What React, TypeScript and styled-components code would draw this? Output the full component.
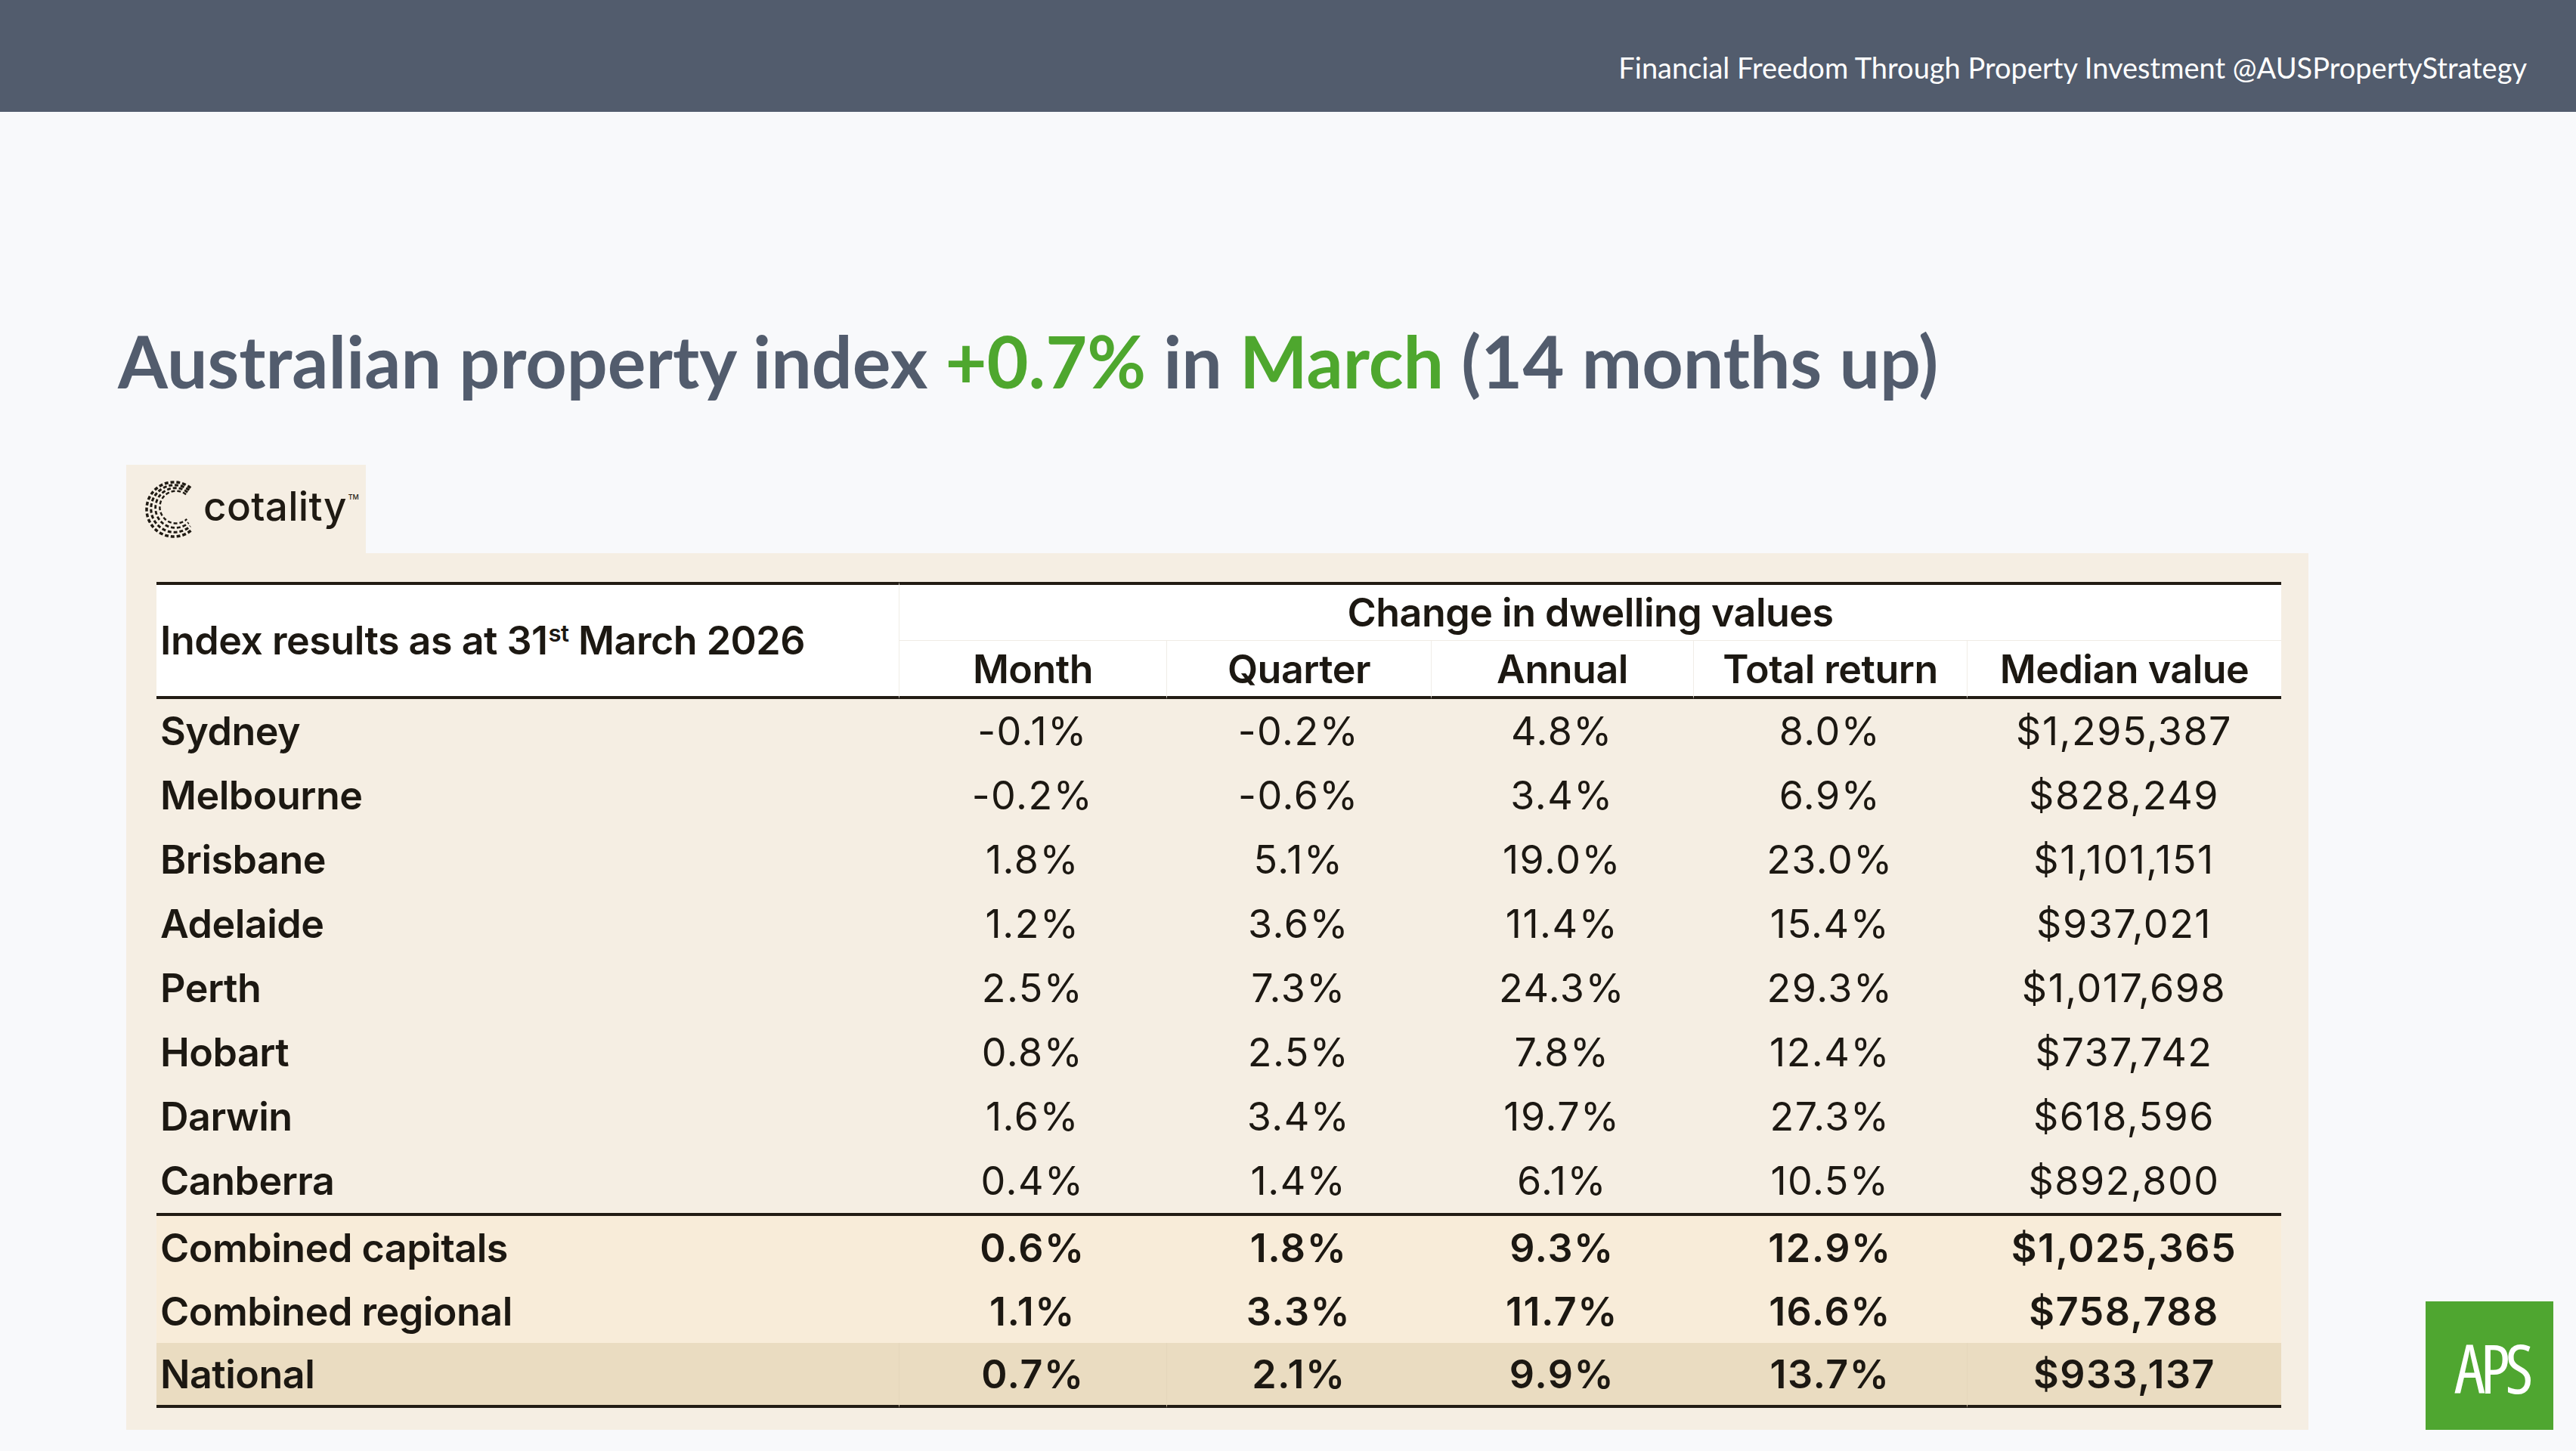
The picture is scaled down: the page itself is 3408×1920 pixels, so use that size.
import styled, { createGlobalStyle } from "styled-components";

const GlobalStyle = createGlobalStyle`
  html, body {
    margin: 0;
    padding: 0;
    background: #f8f9fb;
  }
  * { box-sizing: border-box; }
`;

type Tone = "city" | "combined" | "national";

const cities: string[][] = [
  ["Sydney", "-0.1%", "-0.2%", "4.8%", "8.0%", "$1,295,387"],
  ["Melbourne", "-0.2%", "-0.6%", "3.4%", "6.9%", "$828,249"],
  ["Brisbane", "1.8%", "5.1%", "19.0%", "23.0%", "$1,101,151"],
  ["Adelaide", "1.2%", "3.6%", "11.4%", "15.4%", "$937,021"],
  ["Perth", "2.5%", "7.3%", "24.3%", "29.3%", "$1,017,698"],
  ["Hobart", "0.8%", "2.5%", "7.8%", "12.4%", "$737,742"],
  ["Darwin", "1.6%", "3.4%", "19.7%", "27.3%", "$618,596"],
  ["Canberra", "0.4%", "1.4%", "6.1%", "10.5%", "$892,800"],
];

const summary: { tone: Tone; cells: string[] }[] = [
  { tone: "combined", cells: ["Combined capitals", "0.6%", "1.8%", "9.3%", "12.9%", "$1,025,365"] },
  { tone: "combined", cells: ["Combined regional", "1.1%", "3.3%", "11.7%", "16.6%", "$758,788"] },
  { tone: "national", cells: ["National", "0.7%", "2.1%", "9.9%", "13.7%", "$933,137"] },
];

const columns = ["Month", "Quarter", "Annual", "Total return", "Median value"];
const colWidths = [982, 354, 350, 347, 362, 416];

const Page = styled.div`
  width: 3408px;
  height: 1920px;
  background: #f8f9fb;
  overflow: hidden;
`;

const TopBar = styled.header`
  height: 148px;
  background: #525c6d;
  display: flex;
  justify-content: flex-end;
  align-items: flex-start;
  padding: 67px 65px 0 0;
`;

const Tagline = styled.div`
  font-family: Lato, "Open Sans", sans-serif;
  font-size: 38px;
  line-height: 45px;
  color: #ffffff;
`;

const Main = styled.main`
  padding: 0 30px 0 156px;
`;

const Title = styled.h1`
  margin: 272px 0 0;
  font-family: Lato, "Open Sans", sans-serif;
  font-weight: 700;
  font-size: 95px;
  line-height: 115px;
  color: #525c6d;
`;

const Accent = styled.span`
  color: #4ea72e;
`;

const Lower = styled.div`
  display: flex;
  align-items: flex-end;
  gap: 155px;
  margin-top: 80px;
  padding-left: 11px;
`;

const Report = styled.section`
  width: 2887px;
  display: flex;
  flex-direction: column;
`;

const LogoTab = styled.div`
  width: 317px;
  height: 117px;
  background: #f5eee3;
  display: flex;
  align-items: center;
  gap: 2px;
  padding-left: 24px;
`;

const Wordmark = styled.span`
  font-family: Inter, "Liberation Sans", sans-serif;
  font-weight: 500;
  font-size: 53px;
  letter-spacing: 0.3px;
  color: #1f1a13;
  position: relative;
  top: -4px;
`;

const Tm = styled.sup`
  font-size: 9px;
  vertical-align: 28px;
  margin-left: 2px;
  letter-spacing: 0;
`;

const Panel = styled.div`
  height: 1160px;
  background: #f5eee3;
  padding: 38px 36px 0 40px;
`;

const Table = styled.table`
  width: 2811px;
  table-layout: fixed;
  border-collapse: separate;
  border-spacing: 0;
  font-family: Inter, "Liberation Sans", sans-serif;
  color: #1c1812;
`;

const HeadCell = styled.th<{ $first?: boolean; $top?: boolean; $bottom?: boolean; $divider?: boolean; $low?: boolean }>`
  background: #ffffff;
  font-size: 52px;
  line-height: 62px;
  font-weight: 600;
  letter-spacing: -0.5px;
  padding: 0 0 ${(p) => (p.$low ? "4px" : "0")} ${(p) => (p.$first ? "5px" : "0")};
  text-align: ${(p) => (p.$first ? "left" : "center")};
  vertical-align: ${(p) => (p.$low ? "bottom" : "middle")};
  white-space: nowrap;
  border-top: ${(p) => (p.$top ? "4px solid #221c14" : "0")};
  border-bottom: ${(p) => (p.$bottom ? "4px solid #221c14" : "1px solid #efebe4")};
  border-left: ${(p) => (p.$divider ? "1px solid #f0ede7" : "0")};
`;

const Sup = styled.sup`
  font-size: 31px;
  vertical-align: 17px;
  line-height: 0;
  margin-left: 1px;
`;

const Row = styled.tr<{ $tone: Tone; $h: number }>`
  height: ${(p) => p.$h}px;
  background: ${(p) =>
    p.$tone === "national" ? "#eadcc1" : p.$tone === "combined" ? "#f8ecd9" : "transparent"};
`;

const Cell = styled.td<{ $first?: boolean; $strong?: boolean; $ruleBottom?: boolean; $soft?: boolean }>`
  font-size: 52px;
  font-weight: ${(p) => (p.$first || p.$strong ? 600 : 400)};
  letter-spacing: ${(p) => (p.$first ? "-0.5px" : "1.5px")};
  padding: 0 0 0 ${(p) => (p.$first ? "5px" : "0")};
  text-align: ${(p) => (p.$first ? "left" : "center")};
  vertical-align: middle;
  white-space: nowrap;
  border-bottom: ${(p) => (p.$ruleBottom ? "4px solid #221c14" : "0")};
  border-left: ${(p) => (p.$soft && !p.$first ? "1px solid #e5d7bb" : "0")};
`;

const ApsBadge = styled.div`
  width: 169px;
  height: 170px;
  flex: none;
  background: #4fa630;
  display: flex;
  align-items: center;
  justify-content: center;
  padding-top: 4px;
`;

const ApsText = styled.span`
  font-family: "Open Sans", "Noto Sans", sans-serif;
  font-stretch: 82%;
  font-weight: 500;
  font-size: 90px;
  line-height: 1;
  letter-spacing: -6px;
  color: #ffffff;
  margin-right: -6px;
`;

function CotalityMark() {
  const cx = 40;
  const cy = 40;
  const arc = (r: number, ox: number, oy: number) => {
    const a0 = (-52 * Math.PI) / 180;
    const a1 = (48 * Math.PI) / 180;
    const x0 = cx + ox + r * Math.cos(a0);
    const y0 = cy + oy + r * Math.sin(a0);
    const x1 = cx + ox + r * Math.cos(a1);
    const y1 = cy + oy + r * Math.sin(a1);
    return `M${x0.toFixed(1)} ${y0.toFixed(1)} A${r} ${r} 0 1 0 ${x1.toFixed(1)} ${y1.toFixed(1)}`;
  };
  const rings = [
    { r: 37, ox: 0, oy: 0, w: 3.6 },
    { r: 32, ox: 1, oy: -1, w: 3.2 },
    { r: 27, ox: 2, oy: -2, w: 2.9 },
    { r: 22, ox: 3, oy: -3, w: 2.5 },
  ];
  return (
    <svg width="76" height="82" viewBox="0 0 78 80">
      {rings.map((g, i) => (
        <path
          key={i}
          d={arc(g.r, g.ox, g.oy)}
          fill="none"
          stroke="#1f1a13"
          strokeWidth={g.w}
          strokeDasharray="5 3"
          strokeLinecap="butt"
        />
      ))}
    </svg>
  );
}

export default function App() {
  return (
    <Page>
      <GlobalStyle />
      <TopBar>
        <Tagline>Financial Freedom Through Property Investment @AUSPropertyStrategy</Tagline>
      </TopBar>
      <Main>
        <Title>
          Australian property index <Accent>+0.7%</Accent> in <Accent>March</Accent> (14 months up)
        </Title>
        <Lower>
          <Report>
            <LogoTab>
              <CotalityMark />
              <Wordmark>
                cotality<Tm>TM</Tm>
              </Wordmark>
            </LogoTab>
            <Panel>
              <Table>
                <colgroup>
                  {colWidths.map((w, i) => (
                    <col key={i} style={{ width: w }} />
                  ))}
                </colgroup>
                <thead>
                  <tr style={{ height: 78 }}>
                    <HeadCell $first $top $bottom rowSpan={2}>
                      Index results as at 31<Sup>st</Sup> March 2026
                    </HeadCell>
                    <HeadCell $top $divider colSpan={5}>
                      Change in dwelling values
                    </HeadCell>
                  </tr>
                  <tr style={{ height: 77 }}>
                    {columns.map((c) => (
                      <HeadCell key={c} $bottom $divider $low>
                        {c}
                      </HeadCell>
                    ))}
                  </tr>
                </thead>
                <tbody>
                  {cities.map((r, ri) => (
                    <Row key={r[0]} $tone="city" $h={ri === cities.length - 1 ? 89 : 85}>
                      {r.map((v, i) => (
                        <Cell key={i} $first={i === 0} $ruleBottom={ri === cities.length - 1}>
                          {v}
                        </Cell>
                      ))}
                    </Row>
                  ))}
                  {summary.map((s, ri) => (
                    <Row key={s.cells[0]} $tone={s.tone} $h={ri === summary.length - 1 ? 86 : 84}>
                      {s.cells.map((v, i) => (
                        <Cell
                          key={i}
                          $first={i === 0}
                          $strong
                          $soft={s.tone === "national" && i !== 4 && i !== 3}
                          $ruleBottom={ri === summary.length - 1}
                        >
                          {v}
                        </Cell>
                      ))}
                    </Row>
                  ))}
                </tbody>
              </Table>
            </Panel>
          </Report>
          <ApsBadge>
            <ApsText>APS</ApsText>
          </ApsBadge>
        </Lower>
      </Main>
    </Page>
  );
}
